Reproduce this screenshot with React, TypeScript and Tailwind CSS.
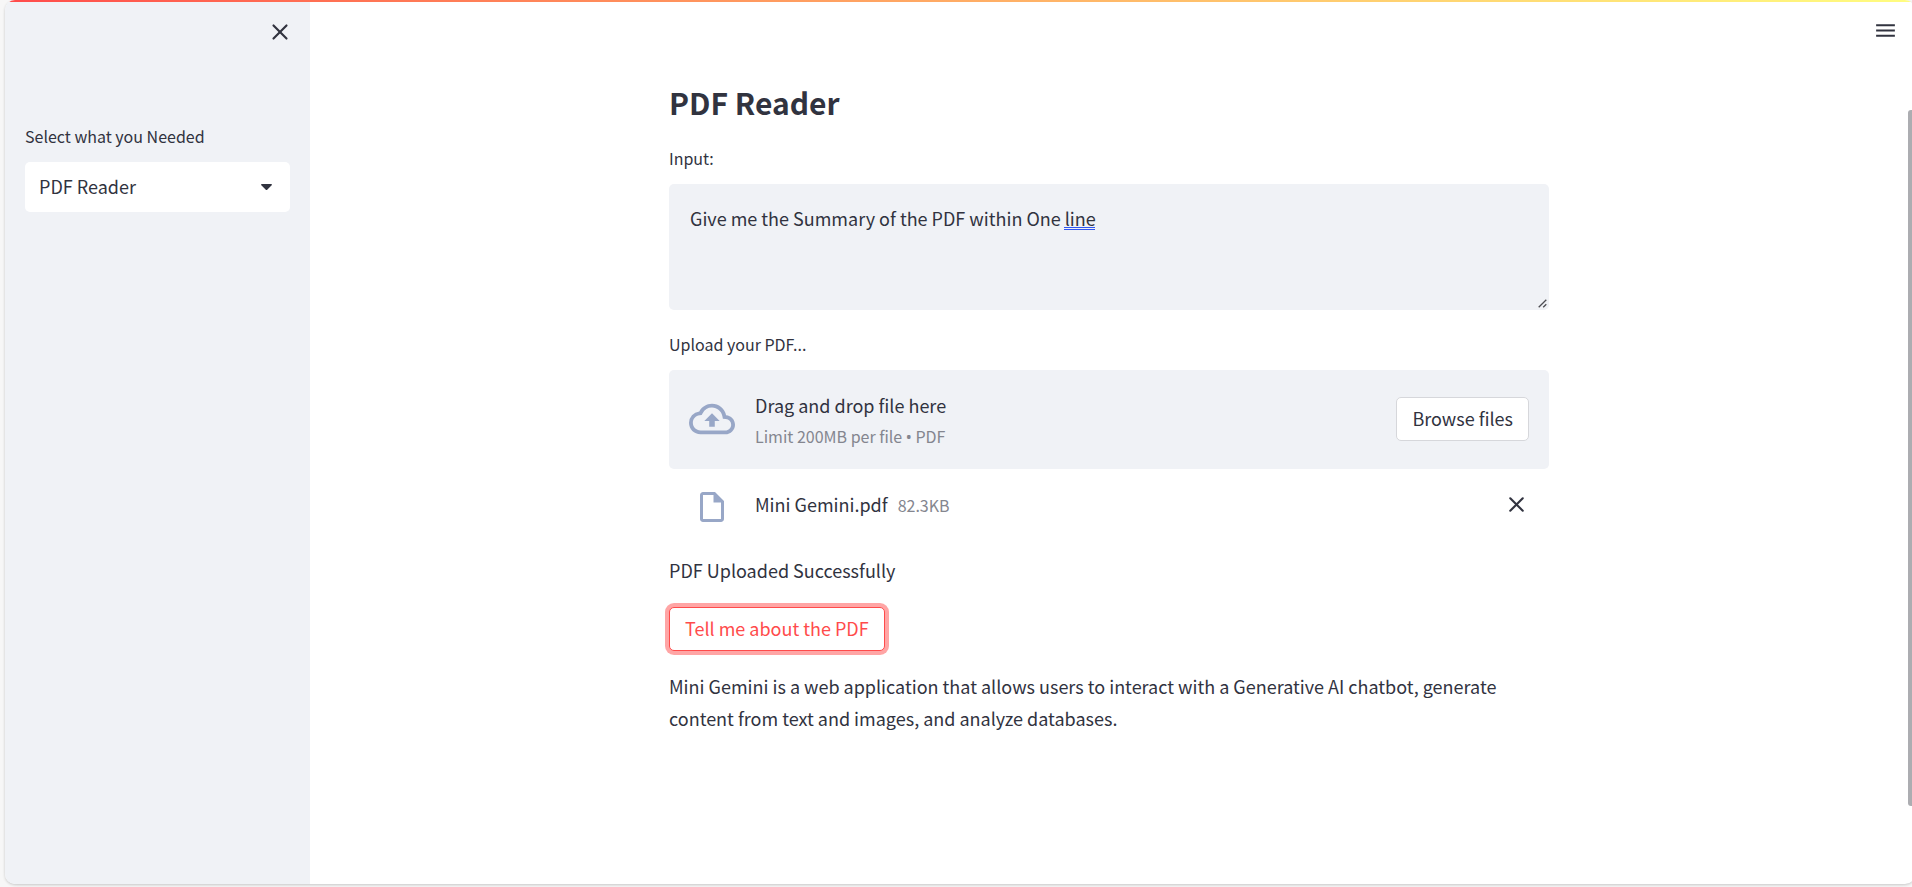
import { useState } from "react";
import { X } from "lucide-react";
import { MdMenu, MdOutlineCloudUpload, MdOutlineInsertDriveFile } from "react-icons/md";

const PAGES = ["PDF Reader"];

function Sidebar() {
  return (
    <aside className="w-[305px] shrink-0 bg-[#f0f2f6] px-5 pt-[18px]">
      <div className="flex h-[106px] items-start justify-end">
        <button type="button" aria-label="Close sidebar" className="-mr-1 flex size-7 items-center justify-center">
          <X className="size-[26px]" strokeWidth={2} />
        </button>
      </div>
      <label htmlFor="page" className="block text-base leading-6">
        Select what you Needed
      </label>
      <div className="relative mt-[14px]">
        <select
          id="page"
          className="h-[50px] w-full appearance-none rounded-[5px] bg-white pb-[2px] pl-[14px] pr-10 text-lg leading-6 outline-none"
        >
          {PAGES.map((page) => (
            <option key={page}>{page}</option>
          ))}
        </select>
        <svg viewBox="0 0 11 6" className="pointer-events-none absolute right-[18px] top-[22px] h-[6px] w-[11px]" aria-hidden="true">
          <path d="M.8 0h9.4c.7 0 1 .7.5 1.2L6.2 5.7a1 1 0 0 1-1.4 0L.3 1.200C-.2.7.1 0 .8 0z" fill="currentColor" />
        </svg>
      </div>
    </aside>
  );
}

function PromptField() {
  const [text, setText] = useState("Give me the Summary of the PDF within One line");
  return (
    <div>
      <label htmlFor="prompt" className="block text-base leading-6">
        Input:
      </label>
      <div className="relative mt-[14px]">
        <textarea
          id="prompt"
          value={text}
          spellCheck={false}
          onChange={(e) => setText(e.target.value)}
          className="block h-[126px] w-full resize-y rounded-[5px] bg-[#f0f2f6] px-[21px] py-[19px] text-lg leading-[30px] outline-none [&::-webkit-resizer]:bg-transparent"
        />
        <span className="pointer-events-none absolute left-[395px] top-[43px] h-[3px] w-[31px] border-y border-[#2f55f0]" />
        <svg viewBox="0 0 9 9" className="pointer-events-none absolute bottom-[2px] right-[2px] size-[9px]" aria-hidden="true">
          <path d="M.7 8.300 8.300.7M5.200 8.300l3.100-3.100" stroke="#4d4d52" strokeWidth="1.300" fill="none" />
        </svg>
      </div>
    </div>
  );
}

function Uploader() {
  return (
    <section>
      <label htmlFor="browse" className="block text-base leading-6">
        Upload your PDF...
      </label>
      <div className="mt-[14px] flex h-[99px] items-center rounded-[5px] bg-[#f0f2f6] px-5 pb-[2px]">
        <MdOutlineCloudUpload className="size-[46px] text-[#98a7c7]" />
        <div className="ml-5 flex-1 pt-1">
          <p className="text-lg leading-[31px]">Drag and drop file here</p>
          <p className="text-base leading-[31px] text-[#84868f]">
            Limit 200MB per file <span className="font-['Noto_Sans',sans-serif] leading-none">•</span> PDF
          </p>
        </div>
        <button
          id="browse"
          type="button"
          className="h-11 rounded-[5px] border border-[#d6d7db] bg-white px-[15px] pb-[2px] text-lg leading-6"
        >
          Browse files
        </button>
      </div>
      <div className="mt-[14px] flex h-[42px] items-center px-5">
        <span className="flex w-[46px] justify-center">
          <MdOutlineInsertDriveFile className="mt-[6px] size-9 text-[#98a7c7]" />
        </span>
        <p className="ml-5 flex flex-1 items-baseline gap-[10px] text-lg leading-[30px]">
          Mini Gemini.pdf <small className="text-base leading-6 text-[#84868f]">82.3KB</small>
        </p>
        <button type="button" aria-label="Remove Mini Gemini.pdf" className="flex size-[25px] items-center justify-center">
          <X className="size-[25px]" strokeWidth={2} />
        </button>
      </div>
    </section>
  );
}

export default function App() {
  return (
    <div className="flex h-screen flex-col overflow-hidden bg-[#f7f7f7] pb-[3px] pl-[5px] font-['Noto_Sans_CJK_SC',sans-serif] text-[#31333f]">
      <div className="relative -mr-[3px] flex flex-1 overflow-hidden rounded-[10px] bg-white shadow-[0_1px_3px_rgba(0,0,0,0.2)]">
        <div className="absolute inset-x-0 top-0 h-[2px] bg-linear-to-r from-[#ff4b4b] to-[#fffd80]" />
        <Sidebar />
        <main className="flex-1 pr-[7px] pt-[81px]">
          <div className="mx-auto flex max-w-[880px] flex-col">
            <h1 className="mb-[23px] text-[30px] font-bold leading-[42px]">PDF Reader</h1>
            <PromptField />
            <div className="mt-[22px]">
              <Uploader />
            </div>
            <p className="mt-[29px] text-lg leading-8">PDF Uploaded Successfully</p>
            <button
              type="button"
              className="mt-[21px] h-11 self-start rounded-[5px] border border-[#ff4b4b] bg-white px-[15px] pb-[2px] text-lg leading-6 text-[#ff4b4b] shadow-[0_0_0_4px_rgba(255,75,75,0.5)]"
            >
              Tell me about the PDF
            </button>
            <p className="mt-[19px] text-lg leading-8">
              Mini Gemini is a web application that allows users to interact with a Generative AI chatbot, generate
              content from text and images, and analyze databases.
            </p>
          </div>
        </main>
        <button type="button" aria-label="Menu" className="absolute right-[17px] top-[18px]">
          <MdMenu className="size-[25px]" />
        </button>
        <div className="absolute bottom-[78px] right-[3px] top-[110px] w-1 rounded-l-[3px] bg-[#acadb1]" />
      </div>
    </div>
  );
}
